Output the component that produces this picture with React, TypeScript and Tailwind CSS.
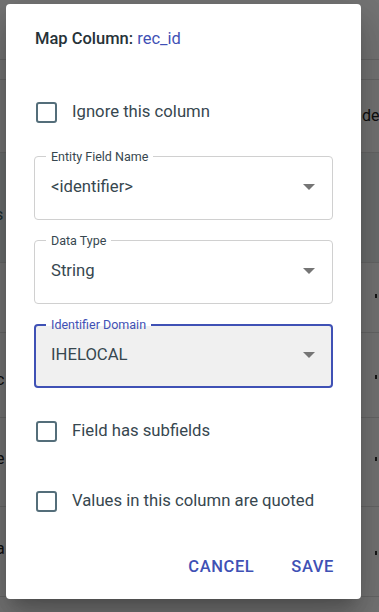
import React from "react";

const Arrow: React.FC = () => (
    <svg width="12" height="6" viewBox="0 0 12 6" className="shrink-0">
        <path d="M0 0 L6 6 L12 0 Z" fill="#757575" />
    </svg>
);

const Check: React.FC<{ label: string }> = ({ label }) => (
    <label className="flex h-[40px] items-center">
        <span className="ml-[2px] h-[21px] w-[21px] rounded-[3px] border-2 border-[#546e7a]" />
        <span className="ml-[15px] text-[16.7px] text-[#37474f]">{label}</span>
    </label>
);

const SelectField: React.FC<{ label: string; value: string; focused?: boolean }> = ({ label, value, focused }) => (
    <div
        className={
            focused
                ? "relative flex h-[64px] items-center rounded-[4px] border-2 border-[#3f51b5] bg-[#f0f0f0] pl-[15px] pr-[16px] pb-[3px]"
                : "relative flex h-[64px] items-center rounded-[4px] border border-[#d0d0d0] pl-[16px] pr-[17px] pb-[3px]"
        }
    >
        <span
            className={
                focused
                    ? "absolute -top-[9px] left-[10px] bg-[linear-gradient(to_bottom,#ffffff_55%,#f0f0f0_55%)] px-[5px] text-[12.5px] leading-[16px] text-[#3f51b5]"
                    : "absolute -top-[8px] left-[11px] bg-white px-[5px] text-[12.5px] leading-[16px] text-[#37474f]"
            }
        >
            {label}
        </span>
        <span className="flex-1 text-[16.7px] text-[#37474f]">{value}</span>
        <Arrow />
    </div>
);

export default function App() {
    return (
        <div className="relative h-[612px] w-[379px] overflow-hidden bg-white font-['Roboto','Liberation_Sans',sans-serif]">
            {/* page behind the dialog */}
            <div className="flex flex-col text-[16px] text-[#222]">
                <div className="h-[60px] border-b border-[#e0e0e0]" />
                <div className="h-[20px] border-b border-[#e0e0e0]" />
                <div className="flex h-[73px] items-center border-b border-[#e0e0e0]">
                    <span className="ml-[362px]">decimal</span>
                </div>
                <div className="flex h-[110px] items-center bg-[#eef1f2] border-b border-[#e0e0e0]">
                    <span className="-ml-[5px] mt-[14px] text-[#37606a]">s</span>
                </div>
                <div className="flex h-[70px] items-center justify-end border-b border-[#e0e0e0] pr-[2px]">
                    <span className="mb-[3px] h-[4px] w-[2px] bg-[#333]" />
                </div>
                <div className="flex h-[85px] items-center justify-between border-b border-[#e0e0e0] pr-[2px]">
                    <span className="-ml-[4px] mt-[10px]">c</span>
                    <span className="mt-[4px] h-[4px] w-[2px] bg-[#333]" />
                </div>
                <div className="flex h-[89px] items-center justify-between border-b border-[#e0e0e0] pr-[2px]">
                    <span className="-ml-[4px] mt-[-6px]">e</span>
                    <span className="mb-[6px] h-[4px] w-[2px] bg-[#333]" />
                </div>
                <div className="flex h-[90px] items-center justify-between border-b border-[#e0e0e0] pr-[2px]">
                    <span className="-ml-[4px] mt-[-6px]">a</span>
                    <span className="mb-[-2px] h-[4px] w-[2px] bg-[#333]" />
                </div>
            </div>

            <div className="absolute inset-0 bg-black/[0.54]" />

            <div className="absolute left-[6px] top-[4px] flex h-[595px] w-[355px] flex-col rounded-[4px] bg-white px-[28px] pt-[23px] shadow-[0_11px_15px_-7px_rgba(0,0,0,0.2),0_24px_38px_3px_rgba(0,0,0,0.14),0_9px_46px_8px_rgba(0,0,0,0.12)]">
                <h2 className="pl-[1px] text-[16.5px] font-medium leading-[24px] text-[#263238]">
                    Map Column: <span className="font-normal text-[#3f51b5]">rec_id</span>
                </h2>

                <div className="mt-[41px]">
                    <Check label="Ignore this column" />
                </div>

                <div className="mt-[24px] flex flex-col gap-[20px]">
                    <SelectField label="Entity Field Name" value="<identifier>" />
                    <SelectField label="Data Type" value="String" />
                    <SelectField label="Identifier Domain" value="IHELOCAL" focused />
                </div>

                <div className="mt-[23px]">
                    <Check label="Field has subfields" />
                </div>
                <div className="mt-[30px]">
                    <Check label="Values in this column are quoted" />
                </div>

                <div className="mt-[28px] mr-[-1px] flex justify-end gap-[37px]">
                    <button className="h-[36px] text-[16.5px] font-medium uppercase tracking-[0.6px] text-[#3f51b5]">Cancel</button>
                    <button className="h-[36px] text-[16.5px] font-medium uppercase tracking-[0.6px] text-[#3f51b5]">Save</button>
                </div>
            </div>
        </div>
    );
}
